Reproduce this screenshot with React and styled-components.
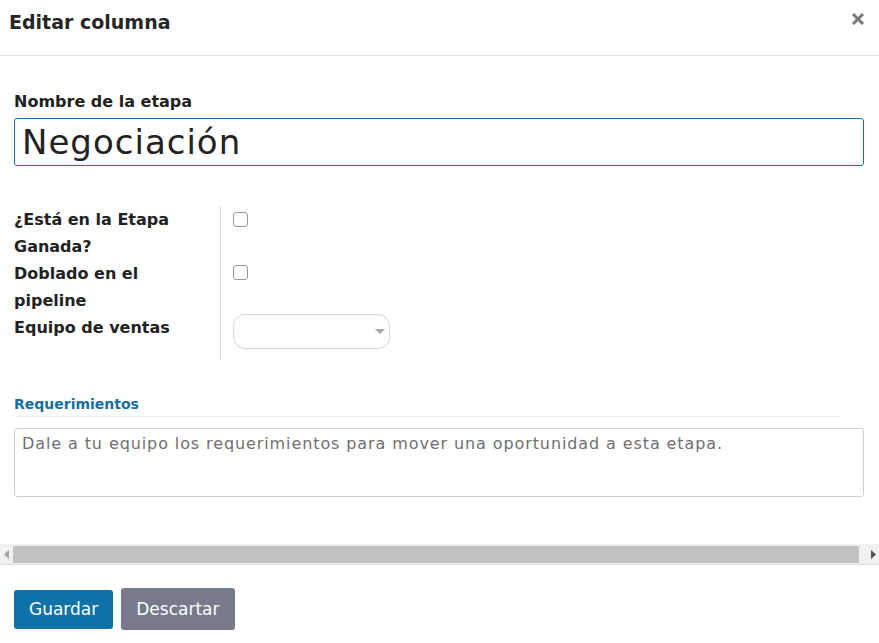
import React from "react";
import styled, { createGlobalStyle } from "styled-components";

const Global = createGlobalStyle`
  html, body {
    margin: 0;
    padding: 0;
    background: #fff;
  }
  body {
    font-family: "DejaVu Sans", Inter, sans-serif;
    color: #222;
  }
`;

const Modal = styled.div`
  width: 879px;
  min-height: 643px;
  background: #fff;
`;

const Header = styled.header`
  height: 56px;
  box-sizing: border-box;
  border-bottom: 1px solid #e3e3e3;
  display: flex;
  align-items: center;
  justify-content: space-between;
  padding: 0 14px 0 9px;
`;

const Title = styled.h4`
  margin: 0 0 12px;
  font-size: 19px;
  font-weight: 600;
  color: #262626;
`;

const Close = styled.button`
  border: 0;
  background: none;
  padding: 0;
  margin-bottom: 18px;
  width: 14px;
  height: 14px;
  display: flex;
  cursor: pointer;
`;

const Body = styled.div`
  padding: 36px 15px 0 14px;
`;

const Label = styled.label`
  display: block;
  font-size: 16px;
  font-weight: 600;
  line-height: 20px;
  color: #222;
`;

const NameInput = styled.input`
  display: block;
  box-sizing: border-box;
  width: 100%;
  height: 48px;
  margin-top: 6px;
  padding: 0 7px;
  border: 1.5px solid #1a73a6;
  border-radius: 3px;
  font-family: inherit;
  font-size: 34px;
  letter-spacing: 1px;
  color: #222;
  outline: none;
`;

const Group = styled.div`
  display: grid;
  grid-template-columns: 206px 1fr;
  margin-top: 40px;
`;

const GroupLabel = styled.div`
  font-size: 16px;
  font-weight: 600;
  line-height: 27px;
  color: #222;
  padding-right: 10px;
`;

const Cell = styled.div`
  border-left: 1px solid #d9d9d9;
  padding-left: 12px;
  padding-top: ${(p) => p.$top || 0}px;
  padding-bottom: ${(p) => p.$bottom || 0}px;
`;

const Check = styled.span`
  display: block;
  width: 13px;
  height: 13px;
  border: 1px solid #9a9a9a;
  border-radius: 3px;
`;

const Select = styled.div`
  position: relative;
  box-sizing: border-box;
  width: 157px;
  height: 35px;
  border: 1px solid #d6d6d6;
  border-radius: 12px;
  &::after {
    content: "";
    position: absolute;
    right: 4px;
    top: 14px;
    border-left: 5px solid transparent;
    border-right: 5px solid transparent;
    border-top: 5px solid #a8a8a8;
  }
`;

const Separator = styled.div`
  margin-top: 36px;
  margin-right: 22px;
  padding-bottom: 4px;
  border-bottom: 1px solid #efefef;
  font-size: 14px;
  font-weight: 600;
  color: #136fa3;
`;

const Notes = styled.textarea`
  display: block;
  box-sizing: border-box;
  width: 100%;
  height: 69px;
  margin-top: 11px;
  padding: 5px 7px;
  border: 1px solid #cfcfcf;
  border-radius: 3px;
  resize: none;
  font-family: inherit;
  font-size: 16px;
  letter-spacing: 0.9px;
  color: #333;
  &::placeholder {
    color: #707070;
  }
`;

const Scrollbar = styled.div`
  margin: 47px -15px 0 -14px;
  height: 21px;
  box-sizing: border-box;
  background: #f1f1f1;
  border-bottom: 1px solid #e0e0e0;
  display: flex;
  align-items: flex-end;
  padding-bottom: 1px;
`;

const Arrow = styled.span`
  width: 13px;
  height: 17px;
  display: flex;
  align-items: center;
  justify-content: center;
`;

const Thumb = styled.div`
  flex: 1;
  height: 17px;
  background: #c1c1c1;
  margin: 0 7px 0 0;
`;

const Footer = styled.footer`
  display: flex;
  align-items: center;
  gap: 8px;
  padding: 23px 14px;
`;

const Button = styled.button`
  border: 0;
  border-radius: 3px;
  padding: 0 15px;
  height: ${(p) => p.$h}px;
  background: ${(p) => p.$bg};
  color: #fff;
  font-family: inherit;
  font-size: 17px;
  cursor: pointer;
`;

export default function App() {
  return (
    <Modal>
      <Global />
      <Header>
        <Title>Editar columna</Title>
        <Close aria-label="Cerrar">
          <svg width="14" height="14" viewBox="0 0 14 14">
            <path d="M2 2L12 12M12 2L2 12" stroke="#7b7b7b" strokeWidth="3" />
          </svg>
        </Close>
      </Header>
      <Body>
        <Label>Nombre de la etapa</Label>
        <NameInput defaultValue="Negociación" />

        <Group>
          <GroupLabel>¿Está en la Etapa Ganada?</GroupLabel>
          <Cell $top={6}>
            <Check />
          </Cell>
          <GroupLabel>Doblado en el pipeline</GroupLabel>
          <Cell $top={5}>
            <Check />
          </Cell>
          <GroupLabel>Equipo de ventas</GroupLabel>
          <Cell $bottom={11}>
            <Select />
          </Cell>
        </Group>

        <Separator>Requerimientos</Separator>
        <Notes placeholder="Dale a tu equipo los requerimientos para mover una oportunidad a esta etapa." />

        <Scrollbar>
          <Arrow>
            <svg width="6" height="9" viewBox="0 0 6 9">
              <path d="M5 0V9L0 4.5Z" fill="#a3a3a3" />
            </svg>
          </Arrow>
          <Thumb />
          <Arrow>
            <svg width="6" height="9" viewBox="0 0 6 9">
              <path d="M1 0V9L6 4.5Z" fill="#505050" />
            </svg>
          </Arrow>
        </Scrollbar>
      </Body>
      <Footer>
        <Button $bg="#0c72a8" $h={39}>Guardar</Button>
        <Button $bg="#767a8b" $h={42}>Descartar</Button>
      </Footer>
    </Modal>
  );
}
